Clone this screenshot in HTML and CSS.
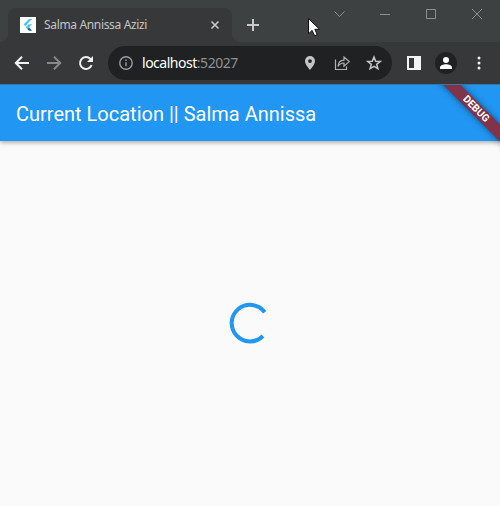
FILE: index.html
```html
<!DOCTYPE html>
<html lang="en">
<head>
<meta charset="utf-8">
<title>Salma Annissa Azizi</title>
<link rel="stylesheet" href="styles.css">
</head>
<body>
<div class="window">
  <header class="tabstrip">
    <div class="tab">
      <svg class="favicon" width="16" height="16" viewBox="0 0 16 16"><path fill="#fff" d="M0 0h16v16H0z"/><path fill="#45c3f5" d="M8.900 2h3.200L5.200 9 3.600 7.400zM8.900 7.200h3.200L9 10.300l-1.600 1.600-1.700-1.600z"/><path fill="#1769aa" d="m7.400 11.900 1.600-1.600 3.100 3.400H9z"/></svg>
      <span class="tab-title">Salma Annissa Azizi</span>
      <svg class="tab-close" width="10" height="10" viewBox="0 0 10 10"><path d="m1.500 1.500 7 7m0-7-7 7"/></svg>
    </div>
    <svg class="new-tab" width="14" height="14" viewBox="0 0 14 14"><path d="M7 1v12M1 7h12"/></svg>
    <div class="controls">
      <svg width="46" height="28" viewBox="0 0 46 28"><path d="m18.500 11.500 5 5 5-5"/></svg>
      <svg width="46" height="28" viewBox="0 0 46 28"><path d="M18 14.500h10"/></svg>
      <svg width="46" height="28" viewBox="0 0 46 28"><path d="M18.500 9.500h9v9h-9z"/></svg>
      <svg width="46" height="28" viewBox="0 0 46 28"><path d="m18 9 10 10m0-10L18 19"/></svg>
    </div>
  </header>
  <nav class="toolbar">
    <svg class="nav-icon" width="16" height="16" viewBox="0 0 16 16"><path d="M15 8H2M8 1.800 1.800 8 8 14.200"/></svg>
    <svg class="nav-icon dim" width="16" height="16" viewBox="0 0 16 16"><path d="M1 8h13M8 1.800 14.200 8 8 14.200"/></svg>
    <svg class="nav-icon" width="16" height="16" viewBox="0 0 16 16"><path d="M13.600 10.200A6 6 0 1 1 12.400 3.900L14 5.500"/><path class="solid" d="M15 1v6H9z"/></svg>
    <div class="address">
      <svg class="info" width="14" height="14" viewBox="0 0 14 14"><circle cx="7" cy="7" r="6.200"/><path d="M7 6.200v4M7 3.500v1.500"/></svg>
      <span class="url">localhost<span class="port">:52027</span></span>
      <svg class="pin" width="12" height="16" viewBox="0 0 12 16"><path fill-rule="evenodd" d="M6 1a5 5 0 0 0-5 5c0 3.600 5 9 5 9s5-5.400 5-9a5 5 0 0 0-5-5zm0 3.200a1.900 1.900 0 1 1 0 3.800 1.900 1.900 0 0 1 0-3.800z"/></svg>
      <svg class="share" width="17" height="16" viewBox="0 0 17 16"><path d="M1.500 4.500v10h11v-3"/><path d="M4 11.300C4.300 7.500 6.500 5.300 10 5.100V2l5.200 4.600-5.200 4.500V8C7.500 8 5.500 9 4 11.300z"/></svg>
      <svg class="star" width="16" height="16" viewBox="0 0 16 16"><path d="m8 2 1.700 4.200 4.500.3-3.500 2.800 1.200 4.400L8 11.300l-3.900 2.400 1.200-4.400-3.500-2.800 4.500-.3z"/></svg>
    </div>
    <svg class="panel" width="14" height="14" viewBox="0 0 14 14"><path fill-rule="evenodd" d="M0 0h14v14H0zM2 2v10h5V2z"/></svg>
    <svg class="avatar" width="22" height="22" viewBox="0 0 22 22"><circle cx="11" cy="11" r="11"/><path fill="#fff" d="M11 5a3 3 0 1 1 0 6 3 3 0 0 1 0-6zM5 17v-1.500c0-2 3.500-3.200 6-3.200s6 1.200 6 3.200V17z"/></svg>
    <svg class="menu" width="4" height="14" viewBox="0 0 4 14"><circle cx="2" cy="2" r="1.500"/><circle cx="2" cy="7" r="1.500"/><circle cx="2" cy="12" r="1.500"/></svg>
  </nav>
  <main class="page">
    <div class="appbar"><h1>Current Location || Salma Annissa</h1></div>
    <div class="debug-clip"><div class="debug">DEBUG</div></div>
    <div class="body">
      <svg width="42" height="42" viewBox="0 0 42 42"><path class="arc" d="M35.700 10.200A18.300 18.300 0 1 0 34 34"/></svg>
    </div>
  </main>
  <svg class="cursor" width="14" height="22" viewBox="0 0 14 22"><path d="M1.500 1.500v15.300l3.600-3.400 2.500 5.400 2.600-1.200-2.400-5.300h4.700z"/></svg>
</div>
</body>
</html>
```
FILE: styles.css
```css
* { box-sizing: border-box; }
body { margin: 0; overflow: hidden; font-family: "Noto Sans", sans-serif; }
svg { display: block; flex: none; }
.window { position: relative; width: 500px; height: 506px; display: flex; flex-direction: column; background: #fafafa; }
.tabstrip { height: 42px; display: flex; background: #3d4142; padding-left: 8px; }
.tab { position: relative; width: 224px; height: 34px; margin-top: 8px; padding-left: 12px; display: flex; align-items: center; background: #373839; border-radius: 8px 8px 0 0; }
.tab::before, .tab::after { content: ""; position: absolute; bottom: 0; width: 8px; height: 8px; }
.tab::before { left: -8px; background: radial-gradient(circle at 0 0, transparent 7.5px, #373839 8px); }
.tab::after { right: -8px; background: radial-gradient(circle at 100% 0, transparent 7.5px, #373839 8px); }
.tab-title { width: 154px; margin: 0 12px 0 8px; font-size: 12px; line-height: 16px; letter-spacing: -.34px; color: #c4c6c8; white-space: nowrap; }
.tab-close, .new-tab { fill: none; stroke: #c8caca; stroke-width: 1.6; }
.new-tab { margin: 18px 0 0 14px; stroke-width: 2; }
.controls { display: flex; margin-left: auto; width: 184px; }
.controls svg { fill: none; stroke: #8c8f90; stroke-width: 1; }
.toolbar { height: 42px; display: flex; align-items: center; padding-left: 14px; background: #373839; }
.nav-icon { margin-right: 16px; fill: none; stroke: #f2f3f3; stroke-width: 2; }
.nav-icon .solid { fill: #f2f3f3; stroke: none; }
.nav-icon.dim { stroke: #85878a; }
.address { width: 284px; height: 34px; margin-left: -2px; padding-left: 11px; display: flex; align-items: center; border-radius: 17px; background: #202123; }
.info { fill: none; stroke: #9b9ea1; stroke-width: 1.4; }
.url { width: 160px; margin-left: 9px; font-size: 14px; line-height: 18px; letter-spacing: -.48px; color: #fff; white-space: nowrap; }
.port { color: #8f9193; }
.pin { margin-left: 2px; fill: #c3c5c7; }
.share { margin-left: 18px; fill: none; stroke: #b0b2b4; stroke-width: 1.2; }
.star { margin-left: 15px; fill: none; stroke: #c3c5c7; stroke-width: 1.5; }
.panel { margin-left: 15px; fill: #f4f4f4; }
.avatar { margin-left: 14px; fill: #202123; }
.menu { margin-left: 20px; fill: #f4f4f4; }
.page { position: relative; flex: 1; display: flex; flex-direction: column; overflow: hidden; border-top: 1px solid #3f7398; }
.appbar { height: 56px; flex: none; display: flex; align-items: center; padding-left: 16px; background: #2196f3; box-shadow: 0 1px 5px rgba(0,0,0,.4); }
h1 { margin: 1px 0 0; font: 400 20px/24px Roboto, sans-serif; color: #fff; white-space: nowrap; }
.debug-clip { position: absolute; top: 0; right: 0; width: 80px; height: 80px; overflow: hidden; }
.debug { position: absolute; left: 6px; top: 18px; width: 100px; height: 12px; transform: rotate(45deg); background: #803349; box-shadow: 0 0 6px rgba(0,0,0,.5); font: 700 10.200px/12px Roboto, sans-serif; text-align: center; color: #fff; }
.body { flex: 1; display: flex; align-items: center; justify-content: center; padding-bottom: 1px; }
.arc { fill: none; stroke: #2196f3; stroke-width: 4; }
.cursor { position: absolute; left: 307px; top: 17px; fill: #fff; stroke: #111; stroke-width: 1; }
```
